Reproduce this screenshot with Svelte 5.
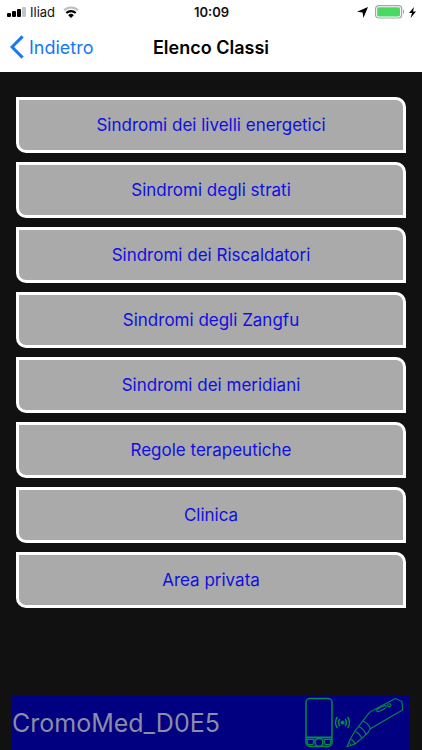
<script lang="ts">
    const classes: string[] = [
        "Sindromi dei livelli energetici",
        "Sindromi degli strati",
        "Sindromi dei Riscaldatori",
        "Sindromi degli Zangfu",
        "Sindromi dei meridiani",
        "Regole terapeutiche",
        "Clinica",
        "Area privata",
    ];

    const device = "CromoMed_D0E5";
</script>

<div class="screen">
    <header>
        <div class="status-bar">
            <div class="status-left">
                <svg width="19" height="10" viewBox="0 0 19 10" aria-hidden="true">
                    <rect x="0" y="6" width="4" height="4" rx="1" />
                    <rect x="5" y="4" width="4" height="6" rx="1" />
                    <rect x="10" y="2" width="4" height="8" rx="1" />
                    <rect x="15" y="0" width="4" height="10" rx="1" fill="#c4c4c4" />
                </svg>
                <span>Iliad</span>
                <svg class="wifi" width="16" height="12" viewBox="0 0 16 12" aria-hidden="true">
                    <path d="M1 4.4a10 10 0 0 1 14 0" fill="none" stroke="#bdbdbd" stroke-width="2" />
                    <path d="M3.3 7a6.8 6.8 0 0 1 9.4 0" fill="none" stroke="#000" stroke-width="2.1" />
                    <path d="M8 12 5.2 9.2a4 4 0 0 1 5.6 0z" />
                </svg>
            </div>
            <time>10:09</time>
            <div class="status-right">
                <svg width="11" height="11" viewBox="0 0 11 11" aria-hidden="true">
                    <path d="M11 0 6.4 11 5.6 5.6 0 4.8z" />
                </svg>
                <svg class="battery" width="30" height="14" viewBox="0 0 30 14" aria-hidden="true">
                    <rect x="0.6" y="0.6" width="26" height="12.4" rx="3" fill="#fff" stroke="#a5a5a5" stroke-width="1.2" />
                    <rect x="2.2" y="2.2" width="22.8" height="9.2" rx="1.4" fill="#4bd964" />
                    <path d="M28 4.6q2 2.2 0 4.4z" fill="#8f8f8f" />
                </svg>
                <svg width="7" height="11" viewBox="0 0 7 11" aria-hidden="true">
                    <path d="M5 0 0 6h3L1.6 11 7 4.6H4z" />
                </svg>
            </div>
        </div>
        <nav>
            <button class="back" type="button">
                <svg width="14" height="24" viewBox="0 0 14 24" aria-hidden="true">
                    <path d="M12.6 1.4 2 12l10.6 10.6" fill="none" stroke="#1479f7" stroke-width="3" />
                </svg>
                Indietro
            </button>
            <h1>Elenco Classi</h1>
        </nav>
    </header>

    <main>
        {#each classes as name}
            <button class="class-button" type="button">{name}</button>
        {/each}
    </main>

    <footer>
        <span>{device}</span>
        <svg width="100" height="52" viewBox="0 0 100 52" fill="none" stroke="#078a48" stroke-width="1.1" aria-hidden="true">
            <!-- phone -->
            <rect x="1" y="1.5" width="26" height="48" rx="4" stroke-width="1.5" />
            <path d="M1 40.5h26" stroke-width="2" />
            <path d="M2 42.5h7l-1 5H3zM26 42.5h-7l1 5h5z" />
            <circle cx="14" cy="45.5" r="4" stroke-width="1.6" />
            <!-- radio waves -->
            <circle cx="37.5" cy="25.5" r="1.5" fill="#078a48" />
            <path d="M34.8 22q-2.4 3.5 0 7M40.2 22q2.4 3.5 0 7M32.3 20q-3.6 5.5 0 11M42.7 20q3.6 5.5 0 11" stroke-width="1.5" />
            <!-- pen -->
            <path d="M42 49.7 45.3 42l5-8.5 3.4-4.2L58 23.7l5.7-7.4q2-2.3 5-3.3L90.3 1.5l6.7 3 .6 8.5-32.3 18.7-2.3 4-6.5 6-6.5 5.3z" />
            <path d="M45.3 42q3.7 1.4 4.6 5M50.3 34.500q5 2.200 6.500 7.200M53.700 29.500q5.500 2.500 7.300 8M58 24q5.500 2.500 7.300 7.700M43.600 46.200q1.700.5 2.200 2" />
            <path d="M72 14.300q-.8-1.800 1.300-2.800l5.500-2.700q2.500-.8 2.500.7-.3 1.500-2.300 2.500l-4.500 2.300q-1.900.8-2.500 0z" />
            <circle cx="84.300" cy="8.300" r="1.600" />
        </svg>
    </footer>
</div>

<style>
    :global(body) {
        background: #111;
    }

    .screen {
        display: flex;
        flex-direction: column;
        min-height: 100vh;
        font-family: Inter, "Liberation Sans", sans-serif;
        background: #111;
    }

    header {
        background: #fff;
    }

    .status-bar {
        display: grid;
        grid-template-columns: 1fr auto 1fr;
        align-items: center;
        height: 24px;
        padding: 0 6px 0 7px;
        font-size: 13px;
        color: #111;
    }

    .status-left,
    .status-right {
        display: flex;
        align-items: center;
        gap: 4px;
    }

    .status-right {
        justify-content: flex-end;
    }

    .wifi {
        margin-left: 4px;
    }

    .battery {
        margin-left: 3px;
    }

    time {
        font-weight: 600;
    }

    nav {
        display: grid;
        grid-template-columns: 1fr auto 1fr;
        align-items: center;
        height: 46px;
        padding: 0 10px 2px;
    }

    .back {
        display: flex;
        align-items: center;
        justify-self: start;
        gap: 5px;
        padding: 0;
        border: 0;
        background: none;
        font: inherit;
        font-size: 18px;
        color: #1479f7;
    }

    h1 {
        margin: 0;
        font-size: 18px;
        font-weight: 600;
        color: #000;
    }

    main {
        display: flex;
        flex: 1;
        flex-direction: column;
        gap: 9px;
        padding: 25px 16px;
    }

    .class-button {
        height: 56px;
        padding: 0 12px;
        border: 3px solid #fff;
        border-radius: 0 10px 0 10px;
        background: #aaa;
        font: inherit;
        font-size: 17px;
        color: #0f0fe0;
    }

    footer {
        display: flex;
        align-items: center;
        justify-content: space-between;
        height: 54px;
        margin: 0 12px;
        padding-right: 5px;
        background: #000080;
        font-size: 25px;
        color: #8c8ca4;
    }
</style>
